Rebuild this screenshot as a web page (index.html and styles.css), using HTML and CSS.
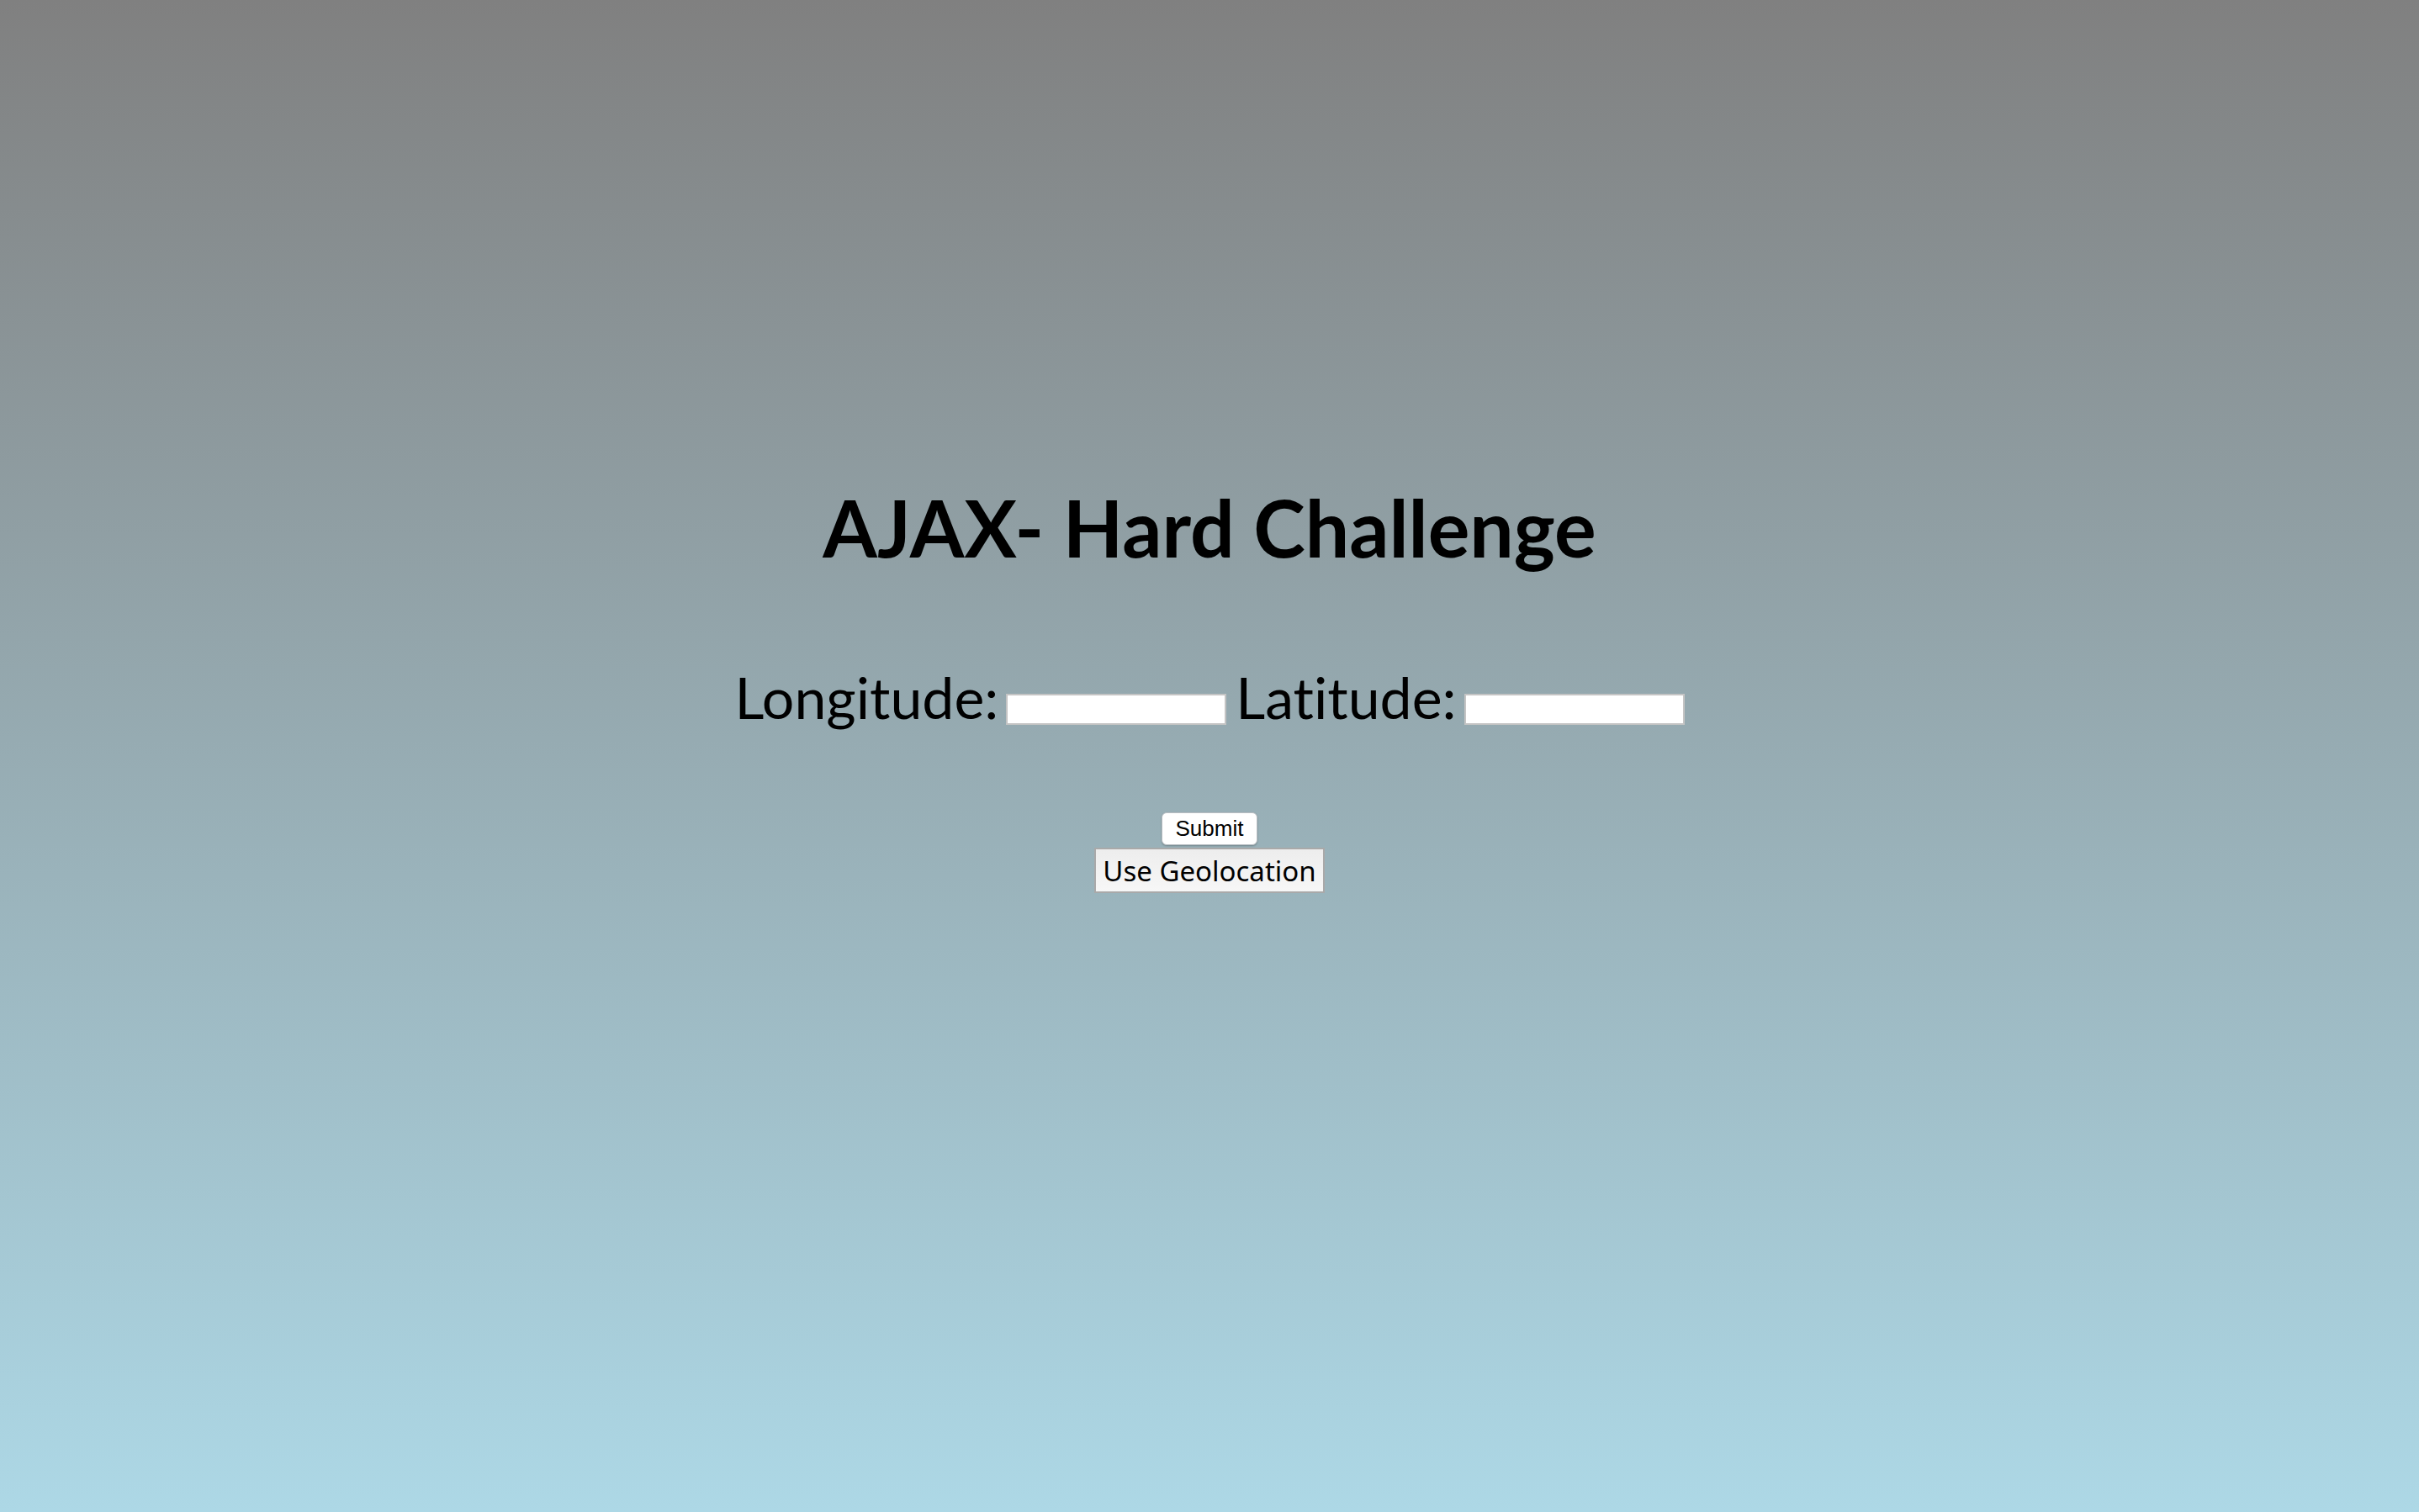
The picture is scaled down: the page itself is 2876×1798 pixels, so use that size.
FILE: index.html
```html
<!DOCTYPE html>
<html>
<head>
<meta charset="utf-8">
<title>AJAX- Hard Challenge</title>
<link rel="stylesheet" href="styles.css">
</head>
<body>
<main class="page">
  <h1 class="title">AJAX- Hard Challenge</h1>
  <form class="coords">
    <label class="label" for="lon">Longitude:</label>
    <input class="field" id="lon" type="text">
    <label class="label label-lat" for="lat">Latitude:</label>
    <input class="field" id="lat" type="text">
  </form>
  <div class="actions">
    <button class="btn-submit" type="button">Submit</button>
    <button class="btn-geo" type="button">Use Geolocation</button>
  </div>
</main>
</body>
</html>
```

FILE: styles.css
```css
html, body {
  margin: 0;
  padding: 0;
  height: 100%;
}
body {
  background: linear-gradient(to bottom, #808080 0%, #add8e6 100%);
  font-family: Lato, "Noto Sans", sans-serif;
  color: #000;
}
.page {
  display: flex;
  flex-direction: column;
  align-items: center;
  padding-top: 572px;
}
.title {
  margin: 0;
  font-family: Lato, sans-serif;
  font-weight: 700;
  font-size: 93px;
  line-height: 110px;
}
.coords {
  display: flex;
  align-items: flex-end;
  margin-top: 107px;
  height: 80px;
}
.label {
  font-family: Lato, sans-serif;
  font-weight: 400;
  font-size: 68px;
  line-height: 80px;
  font-variant-ligatures: none;
}
.label-lat {
  margin-left: 11px;
}
.field {
  box-sizing: border-box;
  width: 262px;
  height: 37px;
  margin: 0 0 7px 9px;
  padding: 0;
  border: 2px solid #c4c4c4;
  background: #fff;
}
.actions {
  display: flex;
  flex-direction: column;
  align-items: center;
  margin-top: 97px;
}
.btn-submit {
  box-sizing: border-box;
  width: 114px;
  height: 39px;
  padding: 0;
  border: 1px solid #b9bec2;
  border-radius: 6px;
  background: #fff;
  box-shadow: 0 1px 2px rgba(0,0,0,0.25);
  font-family: "Liberation Sans", Arial, sans-serif;
  font-size: 26px;
  color: #000;
}
.btn-geo {
  box-sizing: border-box;
  width: 274px;
  height: 54px;
  margin-top: 3px;
  padding: 0;
  border: 2px solid #a9a9a9;
  background: linear-gradient(to bottom, #ededed, #f7f7f7);
  font-family: "Noto Sans", sans-serif;
  font-size: 33px;
  color: #000;
}
```
